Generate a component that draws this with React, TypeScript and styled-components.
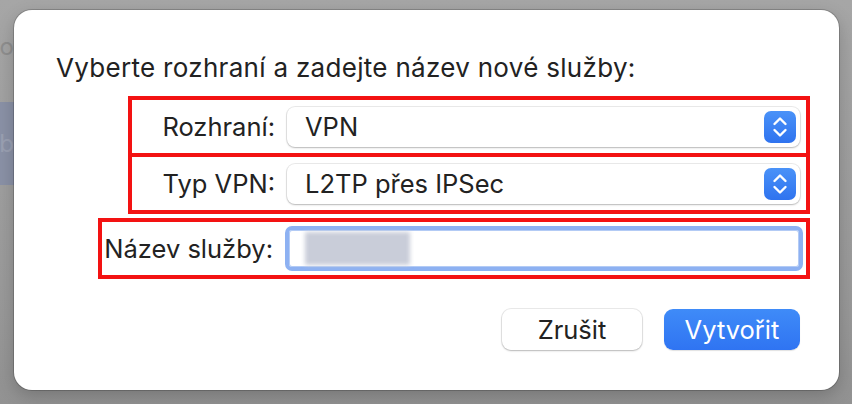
import React from "react";
import styled, { createGlobalStyle } from "styled-components";

const GlobalStyle = createGlobalStyle`
  html, body {
    margin: 0;
    padding: 0;
    background: #9c9c9c;
  }
  body {
    font-family: Inter, "Noto Sans", "Liberation Sans", sans-serif;
    -webkit-font-smoothing: antialiased;
  }
`;

const Screen = styled.div`
  position: relative;
  width: 852px;
  height: 404px;
  overflow: hidden;
  background: linear-gradient(180deg, #a6a6a6 0%, #9a9a9a 70%, #929292 100%);
`;

const Backdrop = styled.div`
  display: flex;
  flex-direction: column;
  width: 14px;
  padding-top: 26px;
  font-size: 24px;
  overflow: hidden;
`;

const BackdropItem = styled.div<{ $selected?: boolean }>`
  height: ${(p) => (p.$selected ? "83px" : "40px")};
  margin-top: ${(p) => (p.$selected ? "36px" : "0")};
  display: flex;
  align-items: center;
  justify-content: flex-end;
  background: ${(p) => (p.$selected ? "#8a91a6" : "transparent")};
  color: ${(p) => (p.$selected ? "#9aa0b2" : "#8e8e8e")};
  white-space: nowrap;
`;

const Sheet = styled.div`
  position: absolute;
  top: 10px;
  left: 14px;
  width: 825px;
  height: 380px;
  box-sizing: border-box;
  background: #ffffff;
  border-radius: 18px;
  box-shadow: 0 0 0 1px rgba(0, 0, 0, 0.18), 0 6px 18px rgba(0, 0, 0, 0.2);
  padding: 43px 29px 40px 42px;
  display: flex;
  flex-direction: column;
`;

const Heading = styled.div`
  font-size: 26px;
  line-height: 30px;
  letter-spacing: 0.3px;
  color: #222222;
  margin-bottom: 13px;
  white-space: nowrap;
`;

const Form = styled.div`
  display: flex;
  flex-direction: column;
  align-items: flex-end;
`;

const Row = styled.div<{ $wide?: boolean; $gap?: number }>`
  box-sizing: border-box;
  width: ${(p) => (p.$wide ? "712px" : "682px")};
  height: 61px;
  margin-top: ${(p) => p.$gap ?? 0}px;
  border: 4px solid #f31212;
  display: flex;
  align-items: center;
  justify-content: flex-end;
  padding-right: 6px;
`;

const Label = styled.div`
  font-size: 25.5px;
  color: #222222;
  margin-right: 12px;
  white-space: nowrap;
`;

const Popup = styled.div`
  box-sizing: border-box;
  width: 513px;
  height: 40px;
  border-radius: 8px;
  background: #fff;
  box-shadow: 0 0 0 1px rgba(0, 0, 0, 0.08), 0 1px 2px rgba(0, 0, 0, 0.22);
  display: flex;
  align-items: center;
  justify-content: space-between;
  padding: 0 4px 0 18px;
  font-size: 25.5px;
  color: #222222;
`;

const Stepper = styled.div`
  width: 32px;
  height: 32px;
  border-radius: 7px;
  background: linear-gradient(180deg, #4a92f8 0%, #2f73ef 100%);
  display: flex;
  align-items: center;
  justify-content: center;
`;

const Field = styled.div`
  box-sizing: border-box;
  width: 518px;
  height: 45px;
  margin-right: -3px;
  border-radius: 7px;
  border: 4px solid #8db1f2;
  background: #fff;
  box-shadow: inset 0 0 0 1px #b3cbf5;
  padding: 2px 0 2px 16px;
  display: flex;
  align-items: stretch;
`;

const Blurred = styled.div`
  width: 105px;
  background: #c9cdd9;
  filter: blur(2px);
`;

const Actions = styled.div`
  display: flex;
  justify-content: flex-end;
  gap: 22px;
  margin-top: 30px;
  padding-right: 10px;
`;

const Button = styled.div<{ $primary?: boolean }>`
  height: 41px;
  box-sizing: border-box;
  width: ${(p) => (p.$primary ? "136px" : "140px")};
  border-radius: 9px;
  display: flex;
  align-items: center;
  justify-content: center;
  font-size: 25.5px;
  color: ${(p) => (p.$primary ? "#ffffff" : "#222222")};
  background: ${(p) =>
    p.$primary ? "linear-gradient(180deg, #3f8bf8 0%, #2f74f2 100%)" : "#ffffff"};
  box-shadow: ${(p) =>
    p.$primary
      ? "0 1px 1px rgba(0, 0, 0, 0.12)"
      : "0 0 0 1px rgba(0, 0, 0, 0.08), 0 1px 2px rgba(0, 0, 0, 0.22)"};
`;

const Chevrons = () => (
  <svg width="18" height="26" viewBox="0 0 18 26" fill="none">
    <path
      d="M3.5 10 L9 4.5 L14.5 10"
      stroke="#fff"
      strokeWidth="2.4"
      strokeLinecap="round"
      strokeLinejoin="round"
    />
    <path
      d="M3.5 16 L9 21.5 L14.5 16"
      stroke="#fff"
      strokeWidth="2.4"
      strokeLinecap="round"
      strokeLinejoin="round"
    />
  </svg>
);

const Select = ({ value }: { value: string }) => (
  <Popup>
    <span>{value}</span>
    <Stepper>
      <Chevrons />
    </Stepper>
  </Popup>
);

export default function App() {
  return (
    <>
      <GlobalStyle />
      <Screen>
        <Backdrop>
          <BackdropItem>oo</BackdropItem>
          <BackdropItem $selected>rb</BackdropItem>
        </Backdrop>
        <Sheet>
          <Heading>Vyberte rozhraní a zadejte název nové služby:</Heading>
          <Form>
            <Row>
              <Label>Rozhraní:</Label>
              <Select value="VPN" />
            </Row>
            <Row $gap={-4}>
              <Label>Typ VPN:</Label>
              <Select value="L2TP přes IPSec" />
            </Row>
            <Row $wide $gap={4}>
              <Label>Název služby:</Label>
              <Field>
                <Blurred />
              </Field>
            </Row>
          </Form>
          <Actions>
            <Button>Zrušit</Button>
            <Button $primary>Vytvořit</Button>
          </Actions>
        </Sheet>
      </Screen>
    </>
  );
}
